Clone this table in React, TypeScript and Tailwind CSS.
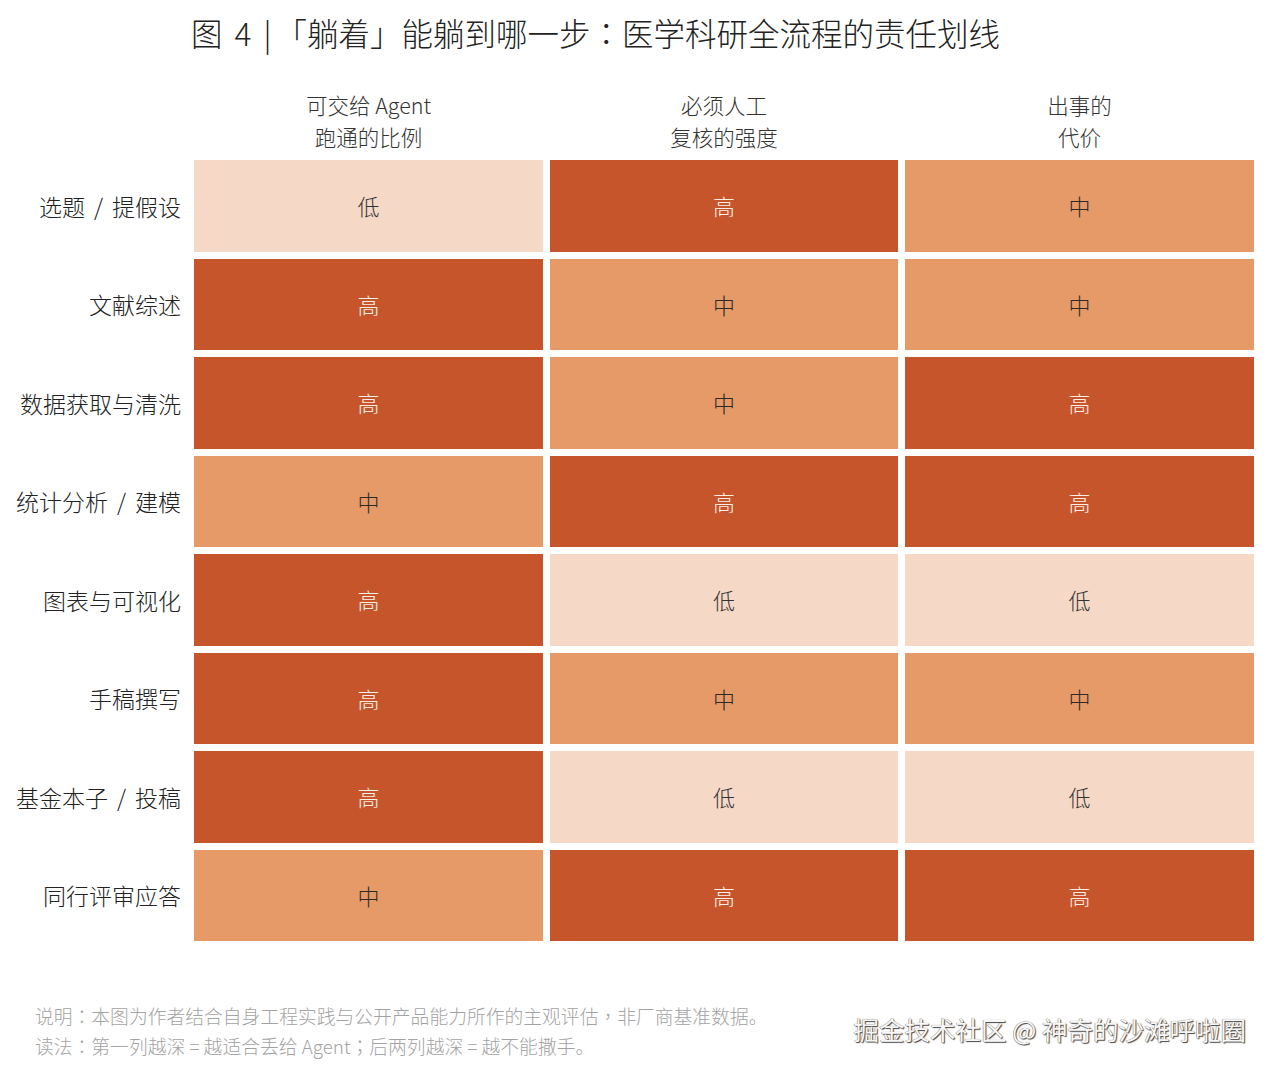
import React from "react";

type Level = "低" | "中" | "高";

const Slash = () => <span className="mx-[9px]">/</span>;

const rows: { label: React.ReactNode; vals: Level[] }[] = [
  { label: <>选题<Slash />提假设</>, vals: ["低", "高", "中"] },
  { label: "文献综述", vals: ["高", "中", "中"] },
  { label: "数据获取与清洗", vals: ["高", "中", "高"] },
  { label: <>统计分析<Slash />建模</>, vals: ["中", "高", "高"] },
  { label: "图表与可视化", vals: ["高", "低", "低"] },
  { label: "手稿撰写", vals: ["高", "中", "中"] },
  { label: <>基金本子<Slash />投稿</>, vals: ["高", "低", "低"] },
  { label: "同行评审应答", vals: ["中", "高", "高"] },
];

const P = ({ c }: { c: string }) => (
  <span style={{ fontFamily: '"Noto Sans CJK TC", "Noto Sans CJK SC", sans-serif' }}>{c}</span>
);

function Cell({ v }: { v: Level }) {
  if (v === "高")
    return (
      <div className="h-[91.5px] bg-[#c6552b] flex items-center justify-center text-[22px] text-[#fbeee4]">
        高
      </div>
    );
  if (v === "中")
    return (
      <div className="h-[91.5px] bg-[#e59a68] flex items-center justify-center text-[22px] text-[#2e2a28]">
        中
      </div>
    );
  return (
    <div className="h-[91.5px] bg-[#f5d9c6] flex items-center justify-center text-[22px] text-[#333]">
      低
    </div>
  );
}

export default function App() {
  return (
    <div
      className="relative w-[1272px] h-[1072px] bg-white overflow-hidden font-light"
      style={{ fontFamily: '"Noto Sans CJK SC", "Noto Sans", sans-serif' }}
    >
      <div className="pt-[12px] pl-[191px] text-[31.5px] leading-[40px] text-[#222] whitespace-nowrap">
        图<span className="ml-[12px]">4</span>
        <span className="ml-[12px]">|</span>
        <span className="ml-[4px]">「躺着」能躺到哪一步</span>
        <P c="：" />
        医学科研全流程的责任划线
      </div>

      <div className="mt-[37px] flex">
        <div className="w-[194px]" />
        <div className="grid grid-cols-[349px_348px_349px] gap-x-[7px] text-[21.5px] leading-[32px] text-[#333] text-center">
          <div>
            可交给 Agent
            <br />
            跑通的比例
          </div>
          <div>
            必须人工
            <br />
            复核的强度
          </div>
          <div>
            出事的
            <br />
            代价
          </div>
        </div>
      </div>

      <div className="mt-[7px] flex flex-col gap-y-[7px]">
        {rows.map((r, idx) => (
          <div key={idx} className="flex items-center">
            <div className="w-[194px] pr-[13px] text-right text-[23px] text-[#222] whitespace-nowrap">
              {r.label}
            </div>
            <div className="grid grid-cols-[349px_348px_349px] gap-x-[7px]">
              {r.vals.map((v, i) => (
                <Cell key={i} v={v} />
              ))}
            </div>
          </div>
        ))}
      </div>

      <div className="mt-[60px] pl-[35px] text-[18.8px] leading-[30px] text-[#a3a3a3] whitespace-nowrap">
        <div>
          说明<P c="：" />本图为作者结合自身工程实践与公开产品能力所作的主观评估<P c="，" />非厂商基准数据。
        </div>
        <div>
          读法<P c="：" />第一列越深 = 越适合丢给 Agent<P c="；" />后两列越深 = 越不能撒手。
        </div>
      </div>

      <div
        className="absolute right-[26px] top-[1012px] text-[25.5px] leading-[34px] text-[#f7f7f7] whitespace-nowrap font-normal"
        style={{ textShadow: "1px 1px 1px #444, -0.5px -0.5px 0.5px #999, 0 0 1px #777" }}
      >
        掘金技术社区 @ 神奇的沙滩呼啦圈
      </div>
    </div>
  );
}
